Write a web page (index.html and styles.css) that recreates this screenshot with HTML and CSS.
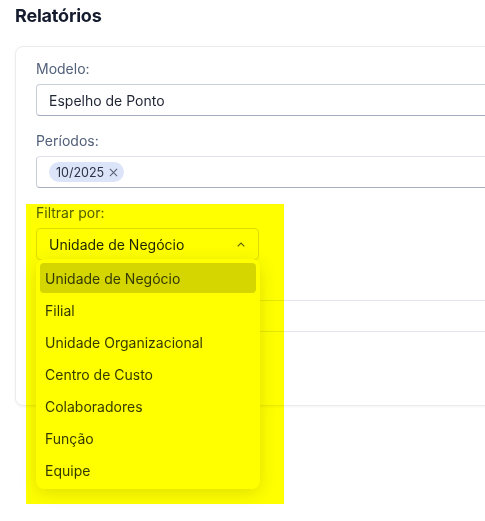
FILE: index.html
```html
<!DOCTYPE html>
<html lang="pt-BR">
<head>
<meta charset="utf-8">
<title>Relatórios</title>
<link rel="stylesheet" href="styles.css">
</head>
<body>
  <main class="page">
    <h1 class="page-title">Relatórios</h1>

    <section class="card">
      <div class="field">
        <label class="field-label">Modelo:</label>
        <div class="input">Espelho de Ponto</div>
      </div>

      <div class="field">
        <label class="field-label">Períodos:</label>
        <div class="input input-tags">
          <span class="chip">10/2025
            <svg class="chip-x" viewBox="0 0 10 10" width="9" height="9"><path d="M1 1L9 9M9 1L1 9"/></svg>
          </span>
        </div>
      </div>

      <div class="field">
        <label class="field-label">Filtrar por:</label>
        <div class="select-wrap">
          <div class="input select open">
            <span>Unidade de Negócio</span>
            <svg class="chevron" viewBox="0 0 8 5" width="8" height="5"><path d="M0.7 4.3L4 1L7.3 4.3"/></svg>
          </div>
          <ul class="menu">
            <li class="menu-item selected">Unidade de Negócio</li>
            <li class="menu-item">Filial</li>
            <li class="menu-item">Unidade Organizacional</li>
            <li class="menu-item">Centro de Custo</li>
            <li class="menu-item">Colaboradores</li>
            <li class="menu-item">Função</li>
            <li class="menu-item">Equipe</li>
          </ul>
        </div>
      </div>

      <div class="field">
        <span class="field-label field-label-empty"></span>
        <div class="input input-soft"></div>
      </div>
    </section>

    <div class="highlight"></div>
  </main>
</body>
</html>
```

FILE: styles.css
```css
html {
  overflow: hidden;
  background: #ffffff;
}

body {
  margin: 0;
  min-height: 521px;
  font-family: "Inter", "Noto Sans", sans-serif;
  color: #1f2937;
}

.page {
  position: relative;
  padding: 4px 15px 0 15px;
}

.page-title {
  margin: 0 0 18px 0;
  font-size: 18px;
  line-height: 24px;
  font-weight: 700;
  color: #141b2d;
  letter-spacing: -0.2px;
}

.card {
  width: 640px;
  box-sizing: border-box;
  border: 1px solid #ececef;
  border-radius: 8px;
  padding: 12px 20px 73px 20px;
  box-shadow: 0 1px 3px rgba(0, 0, 0, 0.05);
  display: flex;
  flex-direction: column;
  gap: 15px;
  background: #ffffff;
}

.field {
  display: flex;
  flex-direction: column;
}

.field-label {
  font-size: 14px;
  line-height: 20px;
  color: #526079;
  margin-bottom: 5px;
}

.field-label-empty {
  height: 20px;
}

.input {
  box-sizing: border-box;
  height: 32px;
  border: 1px solid #c8cdd9;
  border-bottom-color: #a3abbf;
  border-radius: 4px;
  padding: 0 12px;
  display: flex;
  align-items: center;
  font-size: 14px;
  color: #1f2533;
  background: #ffffff;
}

.input-tags {
  border-top-color: #e1e3ec;
  border-bottom-color: #a8aec0;
}

.input-soft {
  border-color: #e5e7ee;
}

.chip {
  display: inline-flex;
  align-items: center;
  gap: 5px;
  height: 20px;
  padding: 0 6px 0 7px;
  border-radius: 10px;
  background: #dbe4f8;
  font-size: 12.5px;
  color: #2b3345;
}

.chip-x {
  stroke: #5a6274;
  stroke-width: 1.2;
  fill: none;
}

.select-wrap {
  position: relative;
  width: 224px;
}

.select {
  width: 223px;
  justify-content: space-between;
  border-color: #dcdfe6;
  padding-right: 13px;
}

.chevron {
  stroke: #5b6272;
  stroke-width: 1.2;
  fill: none;
}

.menu {
  position: absolute;
  top: 100%;
  left: 0;
  width: 224px;
  box-sizing: border-box;
  margin: -1px 0 0 0;
  padding: 4px;
  list-style: none;
  background: #ffffff;
  border-radius: 8px;
  box-shadow: 0 4px 18px rgba(0, 0, 0, 0.13);
  display: flex;
  flex-direction: column;
  gap: 2px;
  z-index: 5;
}

.menu-item {
  height: 30px;
  display: flex;
  align-items: center;
  padding-left: 5px;
  border-radius: 4px;
  font-size: 14px;
  color: #353b47;
}

.menu-item.selected {
  background: #d5d6de;
}

.highlight {
  position: absolute;
  left: 26px;
  top: 204px;
  width: 258px;
  height: 300px;
  background: #ffff00;
  mix-blend-mode: multiply;
  pointer-events: none;
  z-index: 10;
}
```
